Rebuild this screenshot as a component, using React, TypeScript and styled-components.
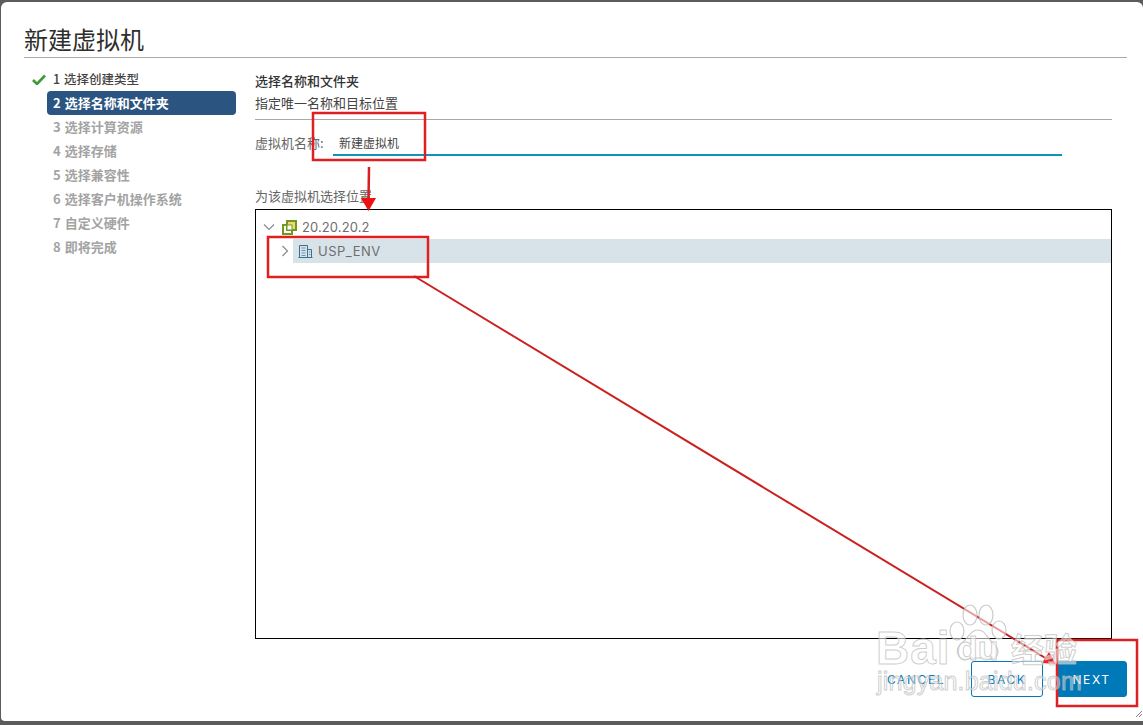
import React from "react";
import styled, { createGlobalStyle } from "styled-components";

const Global = createGlobalStyle`
  html, body { margin: 0; padding: 0; width: 1143px; height: 725px; overflow: hidden; background: #5c5c5c; }
  * { box-sizing: border-box; }
`;
const CJK = `"Noto Sans CJK SC", "Noto Sans", sans-serif`;
const Page = styled.div`
  position: relative; width: 1143px; height: 725px; padding: 2px 0 4px 1px;
  display: flex; font-family: ${CJK}; color: #565656;
`;
const Dialog = styled.div`
  flex: 1; background: #fff; border-radius: 6px 6px 0 4px; padding: 20px 16px 0 23px;
  display: flex; flex-direction: column;
`;
const Title = styled.h1`
  margin: 0; height: 36px; border-bottom: 1px solid #a9a9a9; font-size: 24px; line-height: 33px;
  font-weight: 400; color: #2e2e2e;
`;
const Body = styled.div`display: flex; flex: 1; min-height: 0;`;
const Sidebar = styled.nav`width: 231px; flex: none; padding-top: 9px;`;
const StepRow = styled.div<{ $state: "done" | "active" | "todo" }>`
  position: relative; height: 24px; width: 189px; margin-left: 23px; padding-left: 6px; border-radius: 4px;
  line-height: 23px; white-space: nowrap; word-spacing: 1px;
  font-size: ${(p) => (p.$state === "done" ? 12.5 : 13)}px;
  font-weight: ${(p) => (p.$state === "done" ? 500 : 700)};
  color: ${(p) => (p.$state === "done" ? "#444" : p.$state === "active" ? "#fff" : "#a3a3a3")};
  background: ${(p) => (p.$state === "active" ? "#2b5580" : "transparent")};
`;
const Check = styled.svg`position: absolute; left: -15px; top: 7px; width: 14px; height: 11px;`;
const Main = styled.main`flex: 1; min-width: 0; display: flex; flex-direction: column; padding-right: 15px;`;
const Heading = styled.div`margin-top: 13px; height: 21px; font-size: 13px; line-height: 20px; font-weight: 500; color: #333;`;
const Sub = styled.div`height: 28px; font-size: 13px; line-height: 21px; color: #444; border-bottom: 1px solid #a9a9a9;`;
const NameRow = styled.div`display: flex; height: 36px; align-items: flex-end; font-size: 13px; color: #666;`;
const NameLabel = styled.label`width: 78px; flex: none; line-height: 22px; padding-bottom: 2px;`;
const NameInput = styled.div`
  width: 729px; height: 26px; border-bottom: 2px solid #0e94b6; padding-left: 6px; line-height: 26px; font-size: 12px; color: #444;
`;
const PlaceLabel = styled.div`margin-top: 29px; height: 24px; font-size: 13px; line-height: 22px; color: #666;`;
const Tree = styled.div`height: 430px; border: 1px solid #000; padding-top: 5px; font-family: Inter, "Noto Sans", sans-serif;`;
const TreeRow = styled.div<{ $indent: number }>`
  display: flex; align-items: center; height: 24px; padding-left: ${(p) => p.$indent}px;
  font-size: 13px; color: #6e6e6e;
`;
const Chevron = styled.svg<{ $gap: number }>`width: 12px; height: 12px; flex: none; margin-right: ${(p) => p.$gap}px;`;
const NodeLabel = styled.div<{ $selected?: boolean }>`
  flex: 1; display: flex; align-items: center; gap: 5px; height: 24px; padding-left: ${(p) => (p.$selected ? 5 : 0)}px;
  letter-spacing: ${(p) => (p.$selected ? 0.5 : 0.1)}px;
  background: ${(p) => (p.$selected ? "#d8e3e9" : "transparent")};
`;
const Footer = styled.footer`height: 60px; flex: none; display: flex; justify-content: flex-end; align-items: flex-start; gap: 13px;`;
const Btn = styled.button<{ $kind: "flat" | "outline" | "solid" }>`
  height: 36px; width: ${(p) => (p.$kind === "flat" ? "84px" : p.$kind === "outline" ? "72px" : "71px")}; border-radius: 3px; padding: 0;
  font-family: Inter, "Noto Sans", sans-serif; font-size: 12px; font-weight: 400; letter-spacing: 1.6px;
  border: 1px solid ${(p) => (p.$kind === "flat" ? "transparent" : "#0079b8")};
  background: ${(p) => (p.$kind === "solid" ? "#0079b8" : "transparent")};
  color: ${(p) => (p.$kind === "solid" ? "#fff" : "#0079b8")};
`;
const Annotations = styled.svg`position: absolute; inset: 0; width: 1143px; height: 725px; pointer-events: none;`;
const Grip = styled.svg`position: absolute; left: 1136px; top: 711px; width: 6px; height: 6px;`;
const Mark = styled.div`
  position: absolute; white-space: nowrap; color: rgba(255,255,255,.55); -webkit-text-stroke: 1px rgba(190,190,190,.75);
  font-family: "Liberation Sans", sans-serif; pointer-events: none;
`;
const Bai = styled(Mark)`left: 876px; top: 622px; font-size: 46px; font-weight: 700; line-height: 52px; letter-spacing: 1px;`;
const Du = styled(Mark)`left: 957px; top: 630px; font-size: 34px; font-weight: 700; line-height: 36px;`;
const Jing = styled(Mark)`left: 1011px; top: 628px; font-size: 33px; line-height: 40px; font-family: ${CJK}; font-weight: 700;`;
const Url = styled(Mark)`left: 877px; top: 666px; font-size: 25px; line-height: 30px; letter-spacing: 0.2px; -webkit-text-stroke: 1px rgba(185,185,185,.7); color: rgba(255,255,255,.4);`;
const Paw = styled.svg`position: absolute; left: 945px; top: 603px; width: 64px; height: 62px; pointer-events: none;`;

const steps = ["选择创建类型", "选择名称和文件夹", "选择计算资源", "选择存储", "选择兼容性", "选择客户机操作系统", "自定义硬件", "即将完成"];

export default function App() {
  return (
    <Page>
      <Global />
      <Dialog>
        <Title>新建虚拟机</Title>
        <Body>
          <Sidebar>
            {steps.map((s, i) => (
              <StepRow key={s} $state={i === 0 ? "done" : i === 1 ? "active" : "todo"}>
                {i === 0 && (
                  <Check viewBox="0 0 14 11">
                    <path d="M1 6l4 4 8-8.5" fill="none" stroke="#3f9a35" strokeWidth="2.6" />
                  </Check>
                )}
                {i + 1} {s}
              </StepRow>
            ))}
          </Sidebar>
          <Main>
            <Heading>选择名称和文件夹</Heading>
            <Sub>指定唯一名称和目标位置</Sub>
            <NameRow>
              <NameLabel>虚拟机名称:</NameLabel>
              <NameInput>新建虚拟机</NameInput>
            </NameRow>
            <PlaceLabel>为该虚拟机选择位置</PlaceLabel>
            <Tree>
              <TreeRow $indent={7}>
                <Chevron $gap={7} viewBox="0 0 12 12"><path d="M1 3.500l5 5 5-5" fill="none" stroke="#8a8a8a" strokeWidth="1.200" /></Chevron>
                <NodeLabel>
                  <svg width="15" height="15" viewBox="0 0 15 15">
                    <rect x="1" y="5" width="9" height="9" fill="#fff" stroke="#6f9a1f" strokeWidth="2" />
                    <rect x="5" y="1" width="9" height="9" fill="#f3d774" stroke="#6f9a1f" strokeWidth="2" />
                    <rect x="5" y="5" width="5" height="5" fill="#fff" stroke="#6f9a1f" strokeWidth="1" />
                  </svg>
                  20.20.20.2
                </NodeLabel>
              </TreeRow>
              <TreeRow $indent={23}>
                <Chevron $gap={2} viewBox="0 0 12 12"><path d="M3.500 1l5 5-5 5" fill="none" stroke="#8a8a8a" strokeWidth="1.200" /></Chevron>
                <NodeLabel $selected>
                  <svg width="15" height="14" viewBox="0 0 15 14" fill="none" stroke="#3d6f8f" strokeWidth="1">
                    <path d="M.5 13.500h14M1.500 13.500V1.500h8v12M9.500 5.500h4v8" />
                    <path d="M3.500 4h4M3.500 6.500h4M3.500 9h4M3.500 11.500h4M11 8h1.500M11 10.500h1.500" stroke="#6d93aa" />
                  </svg>
                  USP_ENV
                </NodeLabel>
              </TreeRow>
            </Tree>
          </Main>
        </Body>
        <Footer>
          <Btn $kind="flat">CANCEL</Btn>
          <Btn $kind="outline">BACK</Btn>
          <Btn $kind="solid">NEXT</Btn>
        </Footer>
      </Dialog>
      <Annotations viewBox="0 0 1143 725" fill="none">
        <rect x="313" y="113" width="112" height="47" stroke="#e02020" strokeWidth="2.500" />
        <rect x="268" y="237" width="160" height="40" stroke="#e02020" strokeWidth="2.500" />
        <rect x="1057" y="640" width="80" height="66" stroke="#e02020" strokeWidth="2.500" />
        <path d="M369 167L368.500 200" stroke="#d81e1e" strokeWidth="2.500" />
        <path d="M361 198h15l-7.500 13z" fill="#ee1111" />
        <path d="M414 276L1052 662" stroke="#cc1f1f" strokeWidth="2" />
        <path d="M1056 664l-14-1 7-11z" fill="#ee2222" />
      </Annotations>
      <Paw viewBox="0 0 64 62" fill="rgba(255,255,255,.55)" stroke="rgba(190,190,190,.8)" strokeWidth="1.2">
        <ellipse cx="12" cy="28" rx="7" ry="9" />
        <ellipse cx="25" cy="12" rx="7" ry="10" />
        <ellipse cx="41" cy="12" rx="7" ry="10" />
        <ellipse cx="54" cy="27" rx="7" ry="9" />
        <path d="M33 27c-8 0-10 9-17 14-7 6-3 17 7 15 6-1 14-2 20 0 10 2 13-9 6-15-7-5-8-14-16-14z" />
      </Paw>
      <Bai>Bai</Bai>
      <Du>du</Du>
      <Jing>经验</Jing>
      <Url>jingyan.baidu.com</Url>
      <Grip viewBox="0 0 6 6"><path d="M0 6L6 0M3 6l3-3" stroke="#666" strokeWidth="0.800" /></Grip>
    </Page>
  );
}
